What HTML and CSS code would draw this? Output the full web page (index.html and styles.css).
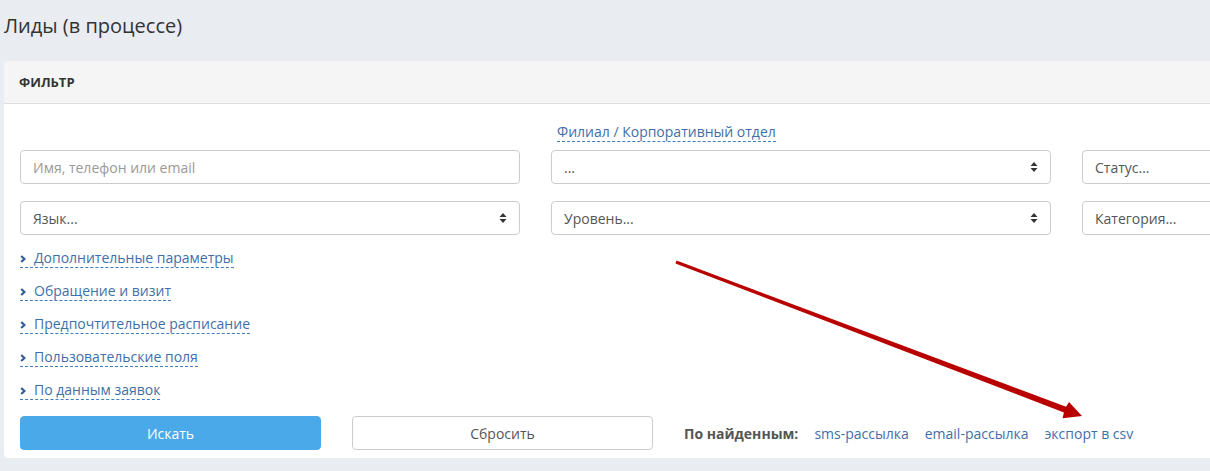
FILE: index.html
```html
<!DOCTYPE html>
<html lang="ru">
<head>
<meta charset="utf-8">
<title>Лиды (в процессе)</title>
<link rel="stylesheet" href="styles.css">
</head>
<body>
<div class="page">
  <h1 class="page-title">Лиды (в процессе)</h1>
  <div class="card">
    <div class="card-header">ФИЛЬТР</div>
    <div class="card-body">
      <div class="filter-grid">
        <div></div>
        <div class="field-label"><span class="dashed">Филиал / Корпоративный отдел</span></div>
        <div></div>
        <div class="control"><span class="placeholder">Имя, телефон или email</span></div>
        <div class="control select"><span>...</span><svg class="sort" viewBox="0 0 8 12" width="8" height="12"><path d="M4 1 L7.5 5 L0.5 5 Z M4 11 L7.5 7 L0.5 7 Z" fill="#333"/></svg></div>
        <div class="control select"><span>Статус...</span><svg class="sort" viewBox="0 0 8 12" width="8" height="12"><path d="M4 1 L7.5 5 L0.5 5 Z M4 11 L7.5 7 L0.5 7 Z" fill="#333"/></svg></div>
        <div class="control select"><span>Язык...</span><svg class="sort" viewBox="0 0 8 12" width="8" height="12"><path d="M4 1 L7.5 5 L0.5 5 Z M4 11 L7.5 7 L0.5 7 Z" fill="#333"/></svg></div>
        <div class="control select"><span>Уровень...</span><svg class="sort" viewBox="0 0 8 12" width="8" height="12"><path d="M4 1 L7.5 5 L0.5 5 Z M4 11 L7.5 7 L0.5 7 Z" fill="#333"/></svg></div>
        <div class="control select"><span>Категория...</span><svg class="sort" viewBox="0 0 8 12" width="8" height="12"><path d="M4 1 L7.5 5 L0.5 5 Z M4 11 L7.5 7 L0.5 7 Z" fill="#333"/></svg></div>
      </div>
      <ul class="toggles">
        <li><span class="dashed toggle"><svg class="chev" viewBox="0 0 6 8" width="6" height="8"><path d="M1.2 1 L4.4 4 L1.2 7" fill="none" stroke="#2f5f99" stroke-width="2.2"/></svg>Дополнительные параметры</span></li>
        <li><span class="dashed toggle"><svg class="chev" viewBox="0 0 6 8" width="6" height="8"><path d="M1.2 1 L4.4 4 L1.2 7" fill="none" stroke="#2f5f99" stroke-width="2.2"/></svg>Обращение и визит</span></li>
        <li><span class="dashed toggle"><svg class="chev" viewBox="0 0 6 8" width="6" height="8"><path d="M1.2 1 L4.4 4 L1.2 7" fill="none" stroke="#2f5f99" stroke-width="2.2"/></svg>Предпочтительное расписание</span></li>
        <li><span class="dashed toggle"><svg class="chev" viewBox="0 0 6 8" width="6" height="8"><path d="M1.2 1 L4.4 4 L1.2 7" fill="none" stroke="#2f5f99" stroke-width="2.2"/></svg>Пользовательские поля</span></li>
        <li><span class="dashed toggle"><svg class="chev" viewBox="0 0 6 8" width="6" height="8"><path d="M1.2 1 L4.4 4 L1.2 7" fill="none" stroke="#2f5f99" stroke-width="2.2"/></svg>По данным заявок</span></li>
      </ul>
      <div class="actions">
        <button class="btn btn-primary" type="button">Искать</button>
        <button class="btn btn-default" type="button">Сбросить</button>
        <div class="found">
          <b>По найденным:</b>
          <a href="#">sms-рассылка</a>
          <a href="#">email-рассылка</a>
          <a href="#">экспорт в csv</a>
        </div>
      </div>
    </div>
  </div>
  <svg class="annotation" width="1210" height="471" viewBox="0 0 1210 471">
    <polygon fill="#b80000" points="676.5,260.6 1066.1,406.8 1069,402 1082,416 1062.6,418.2 1063.9,412.4 675.5,263.4"/>
  </svg>
</div>
</body>
</html>
```

FILE: styles.css
```css
html, body {
  margin: 0;
  padding: 0;
  background: #e9ecf1;
}
body {
  font-family: "Open Sans", "Liberation Sans", sans-serif;
  font-size: 14px;
  color: #555;
}
.page {
  position: relative;
  width: 1210px;
  height: 471px;
  overflow: hidden;
  padding-left: 4px;
  box-sizing: border-box;
}
.page-title {
  margin: 0;
  padding-top: 13px;
  font-size: 20px;
  line-height: 26px;
  font-weight: 400;
  color: #333;
}
.card {
  margin-top: 22px;
  width: 1594px;
  background: #fff;
  border-radius: 4px;
}
.card-header {
  height: 42px;
  line-height: 42px;
  padding-left: 15px;
  background: #f5f5f5;
  border-bottom: 1px solid #dedede;
  font-size: 13px;
  font-weight: 700;
  color: #333;
  border-radius: 4px 4px 0 0;
}
.card-body {
  padding: 18px 16px 8px 16px;
}
.filter-grid {
  display: grid;
  grid-template-columns: repeat(3, 500px);
  column-gap: 31px;
  row-gap: 17px;
}
.field-label {
  padding-left: 6px;
  line-height: 20px;
  color: #3f6fa8;
  margin-bottom: -9px;
}
.dashed {
  border-bottom: 1px dashed #3f7cc0;
}
.control {
  height: 34px;
  box-sizing: border-box;
  border: 1px solid #ccc;
  border-radius: 4px;
  padding: 0 12px;
  display: flex;
  align-items: center;
  justify-content: space-between;
  color: #555;
}
.placeholder {
  color: #999;
}
.sort {
  display: block;
}
.toggles {
  list-style: none;
  margin: 13px 0 0 0;
  padding: 0;
}
.toggles li {
  line-height: 20px;
  height: 20px;
  margin-bottom: 13px;
}
.toggle {
  color: #3f6fa8;
  display: inline-block;
  line-height: 19px;
}
.chev {
  display: inline-block;
  margin: 0 8px 1px 0;
  vertical-align: middle;
}
.actions {
  display: flex;
  align-items: center;
  gap: 31px;
  margin-top: 16px;
}
.btn {
  width: 301px;
  height: 34px;
  box-sizing: border-box;
  border-radius: 4px;
  font-family: inherit;
  font-size: 14px;
  padding: 0;
}
.btn-primary {
  background: #4aa9e9;
  border: 1px solid #4aa9e9;
  color: #fff;
}
.btn-default {
  background: #fff;
  border: 1px solid #ccc;
  color: #555;
}
.found {
  display: flex;
  align-items: center;
  gap: 16px;
  color: #555;
}
.found b {
  font-weight: 700;
}
.found a {
  color: #3f6fa8;
  text-decoration: none;
}
.annotation {
  position: absolute;
  left: 0;
  top: 0;
  pointer-events: none;
}
```
